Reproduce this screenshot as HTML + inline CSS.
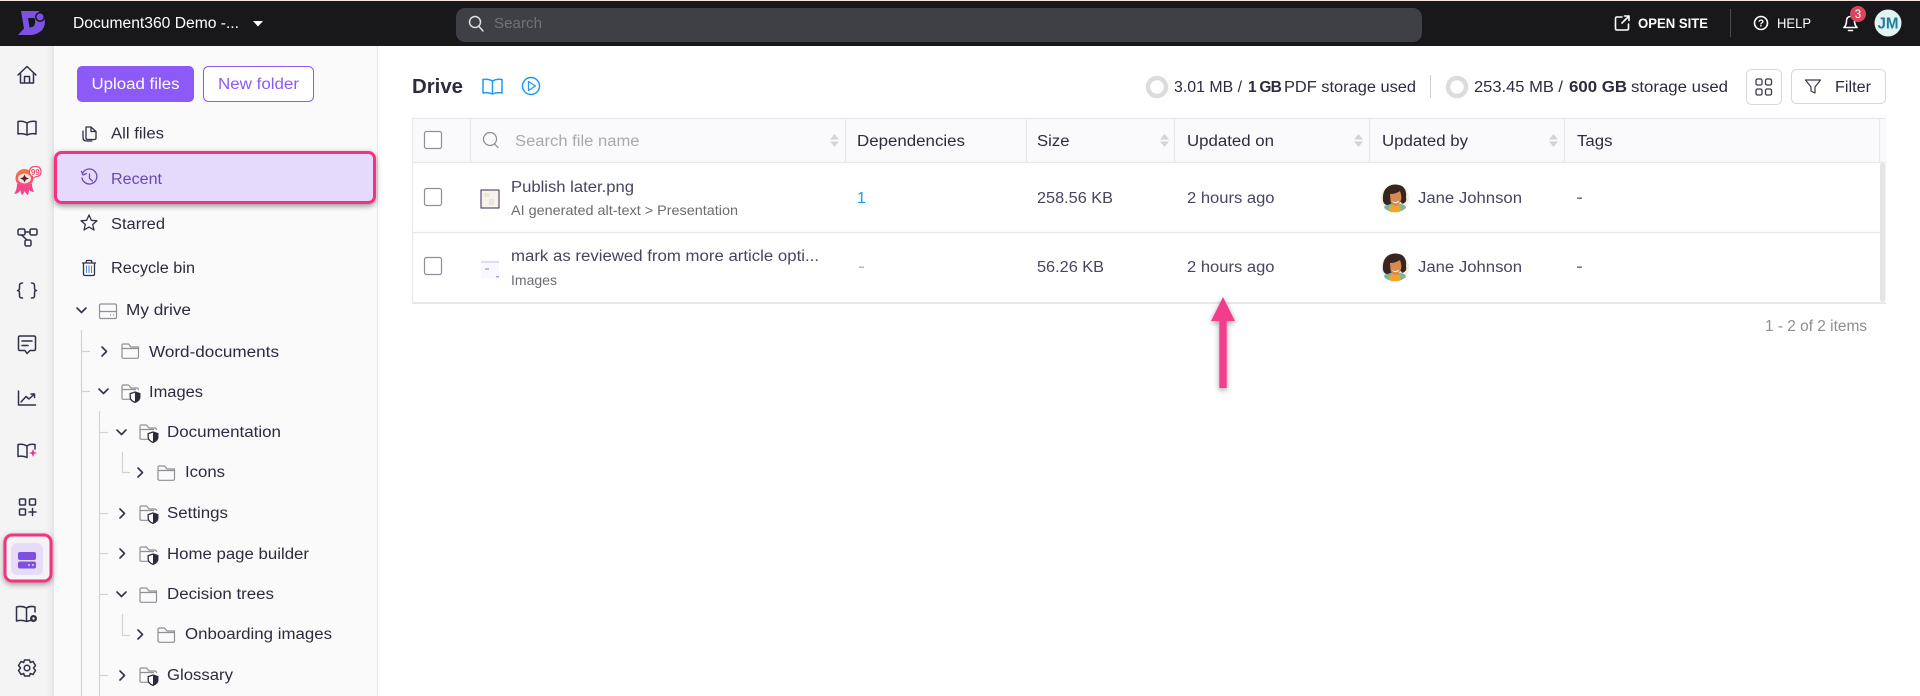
<!DOCTYPE html>
<html lang="en"><head><meta charset="utf-8"><title>Drive</title>
<style>
html,body{margin:0;padding:0;background:#fff;overflow:hidden}
svg{display:block}
text{font-family:"Liberation Sans",sans-serif;font-size:15.5px;fill:#2d2b3d}
.t{fill:#2d2b3d}
.r{fill:#46465f}
.s{font-size:14px;fill:#6b6b72}
.i{fill:none;stroke:#2f3148;stroke-width:1.5;stroke-linecap:round;stroke-linejoin:round}
.g{fill:none;stroke:#8f8f96;stroke-width:1.2;stroke-linejoin:round}
.c{fill:none;stroke:#33334a;stroke-width:1.6;stroke-linecap:round;stroke-linejoin:round}
.l{stroke:#d4d4d8;stroke-width:1.2}
.b{fill:#fff;stroke:#8f8f9a;stroke-width:1.2}
.h{stroke:#e8e8ec;stroke-width:1.2}
.w{fill:none;stroke:#fff;stroke-width:1.6;stroke-linecap:round;stroke-linejoin:round}
</style></head><body>
<svg xmlns="http://www.w3.org/2000/svg" width="1920" height="696" viewBox="0 0 1920 696">
<defs>
<linearGradient id="rail" x1="0" x2="1" y1="0" y2="0"><stop offset="0" stop-color="#f3f3f4" stop-opacity="0"/><stop offset="1" stop-color="#e4e4e6"/></linearGradient>
<linearGradient id="bot" x1="0" x2="0" y1="0" y2="1"><stop offset="0" stop-color="#f47a3c"/><stop offset="1" stop-color="#f4468f"/></linearGradient>
<filter id="sh" x="-10%" y="-30%" width="120%" height="170%"><feDropShadow dx="0" dy="2" stdDeviation="3" flood-color="#000" flood-opacity=".42"/></filter>
<filter id="sh2" x="-40%" y="-30%" width="180%" height="160%"><feDropShadow dx="0" dy="2" stdDeviation="3" flood-color="#000" flood-opacity=".38"/></filter>
<g id="folder"><path class="g" d="M1 14V2.5Q1 1 2.5 1H7.5L10 4H17.5V14Q17.5 15.3 16 15.3H2.5Q1 15.3 1 14ZM1 5.5H17.5"/></g>
<g id="sfolder"><path class="g" d="M1 14V2.5Q1 1 2.5 1H7.5L10 4H15.5Q17.5 4 17.5 6M1 5.5H15M1 14Q1 15.3 2.5 15.3H13"/><path d="M14 8L18.8 9.6V13.4Q18.8 16.4 14 18.4Q9.2 16.4 9.2 13.4V9.6Z" fill="#fafafa" stroke="#2b2b3d" stroke-width="1.3"/><path d="M14 8L18.8 9.6V13.4Q18.8 16.4 14 18.4Z" fill="#2b2b3d"/></g>
<path id="cd" class="c" d="M0 0L4.5 4.5L9 0"/>
<path id="cr" class="c" d="M0 0L4.5 4.5L0 9"/>
<g id="sort"><path d="M0 5.5L4.5 0L9 5.5Z M0 7.5L4.5 13L9 7.5Z" fill="#d3d3d8"/></g>
<g id="avatar">
<circle cx="14" cy="14" r="14" fill="#eef0dc"/>
<path d="M3 24Q3 21 8 20L20 20Q25 21 25 24Q20 28.500 14 28Q8 28.500 3 24Z" fill="#7fb59a"/>
<path d="M8 25Q9 21 14 21Q19 21 20 25L18.500 28Q14 28.500 9.500 28Z" fill="#f1a52d"/>
<path d="M2 17Q1 6 8 2Q14 -1 21 2Q26 6 25 13Q26 18 23 19Q21 21 20 18L9 20Q4 23 2 17Z" fill="#38251f"/>
<path d="M9 10Q14 10 19 7Q21 12 20 16Q18 22 14.500 22Q10.500 21.500 9.500 17Z" fill="#d98a50"/>
<path d="M11.500 17.500Q14.500 19.500 18 17Q15.500 20.500 11.500 17.500Z" fill="#fff" stroke="#fff" stroke-width=".6"/>
</g>
</defs>

<rect width="1920" height="696" fill="#fff"/>
<!-- top bar -->
<rect width="1920" height="46" fill="#18181b"/>
<rect width="1920" height="1" fill="#f7e6e0"/>
<path d="M21 11H38Q44.500 14 45 22Q44.500 30 38 33Q35 35 30 35H18L24 28.500Z" fill="#7c52e0"/>
<path d="M28 18H34.500Q36 22 34 26Q32 27.500 29.500 27.500Z" fill="#18181b"/>
<circle cx="40" cy="17" r="5" fill="#18181b"/><circle cx="40" cy="17" r="3.500" fill="#7c52e0"/>
<text x="73" y="28" textLength="166" lengthAdjust="spacingAndGlyphs" style="fill:#fff">Document360 Demo -...</text>
<path d="M253 21H263L258 26.500Z" fill="#fff"/>
<rect x="456" y="8" width="966" height="34" rx="9" fill="#3f3f46"/>
<circle cx="475" cy="22" r="5.500" fill="none" stroke="#dfdfe3" stroke-width="1.500"/><path d="M479 26.500L483 31" stroke="#dfdfe3" stroke-width="1.500" stroke-linecap="round"/>
<text x="494" y="28" textLength="48" lengthAdjust="spacingAndGlyphs" style="fill:#71717a;font-size:14.500px">Search</text>
<path class="w" d="M1622 17H1617Q1615.500 17 1615.500 18.500V28.500Q1615.500 30 1617 30H1627Q1628.500 30 1628.500 28.500V24M1622 23L1629 16M1624.500 16H1629V20.500"/>
<text x="1638" y="28" textLength="70" lengthAdjust="spacingAndGlyphs" style="fill:#fff;font-weight:700;font-size:13.500px">OPEN SITE</text>
<rect x="1730" y="9" width="1" height="28" fill="#4a4a50"/>
<circle cx="1761" cy="23" r="6.500" class="w"/>
<text x="1761" y="26.500" text-anchor="middle" style="fill:#fff;font-size:10px;font-weight:700">?</text>
<text x="1777" y="28" textLength="34" lengthAdjust="spacingAndGlyphs" style="fill:#fff;font-size:14px">HELP</text>
<path class="w" d="M1844 27.500Q1846.500 25 1846.500 21Q1846.500 16.500 1850.500 16.500Q1854.500 16.500 1854.500 21Q1854.500 25 1857 27.500ZM1848.500 30.500H1852.500"/>
<circle cx="1858" cy="14" r="8" fill="#d8465c"/>
<text x="1858" y="18" text-anchor="middle" style="fill:#fff;font-size:11.500px">3</text>
<circle cx="1888" cy="23" r="13.500" fill="#e3f1f2"/>
<text x="1888" y="28.500" text-anchor="middle" style="fill:#1a7f9c;font-size:15.500px;font-weight:700" textLength="21" lengthAdjust="spacingAndGlyphs">JM</text>

<!-- rail -->
<rect y="46" width="54" height="650" fill="#f4f4f5"/>
<rect x="44" y="46" width="10" height="650" fill="url(#rail)"/>
<!-- sidebar -->
<rect x="54" y="46" width="323" height="650" fill="#fafafa"/>
<rect x="377" y="46" width="1" height="650" fill="#e8e8ea"/>

<!-- rail icons -->
<path class="i" d="M18 75L27 66.500L36 75M20.500 73V83H33.500V73M24.500 83V76.500H29.500V83"/>
<path class="i" d="M27 123Q23 120.500 18 121.500V134Q23 133 27 135Q31 133 36 134V121.500Q31 120.500 27 123ZM27 123V135"/>
<!-- bot -->
<path d="M17 184Q17 190 14 194Q19 193.500 20.500 190Q20.500 193 22 195Q24 193.500 24.500 191Q26 194 28 195Q29 192.500 29 190Q31 192 34 192Q32 188 32 184Z" fill="#f4468f"/>
<circle cx="24.500" cy="178" r="9" fill="url(#bot)"/>
<ellipse cx="24.500" cy="178.500" rx="6.500" ry="5" fill="#fbe3dc"/>
<path d="M24.500 174.500L25.800 177.300L29 178.500L25.800 179.700L24.500 182.500L23.200 179.700L20 178.500L23.200 177.300Z" fill="#5a2030"/>
<path d="M35.500 166.500Q29.500 166.500 29.500 172Q29.500 175.800 32.500 176.500L32 179L35.500 176.800Q41 176.500 41 172Q41 166.500 35.500 166.500Z" fill="#fff" stroke="#f04a72" stroke-width="1.200"/>
<text x="35.300" y="175" text-anchor="middle" style="font-size:8px;fill:#f04a72;font-weight:700">99</text>
<!-- workflow -->
<rect x="18" y="229" width="7" height="6" rx="1.500" class="i"/><rect x="30" y="229" width="7" height="6" rx="1.500" class="i"/><rect x="25" y="240" width="6" height="6" rx="1.500" class="i"/><path class="i" d="M25 232H30M21.500 235L27 240"/>
<path class="i" d="M22.500 283Q19.500 283 19.500 285.500V288Q19.500 290.500 17.500 290.500Q19.500 290.500 19.500 293V296Q19.500 298 22.500 298M31.500 283Q34.500 283 34.500 285.500V288Q34.500 290.500 36.500 290.500Q34.500 290.500 34.500 293V296Q34.500 298 31.500 298"/>
<path class="i" d="M20 336H34Q35.500 336 35.500 337.500V349Q35.500 350.500 34 350.500H30L27 353.500L25 350.500H20Q18.500 350.500 18.500 349V337.500Q18.500 336 20 336ZM22 341H32M22 345.500H28"/>
<path class="i" d="M18.500 391V405H35.500M21 402L26 396.500L29 399L34.500 394M31 394H34.500V397.500"/>
<path class="i" d="M27 446Q23 443.500 18 444.500V456.500Q23 455.500 27 457.500M27 446Q30 443.500 35 444.500V449M27 446V457.500"/>
<path d="M33 449L34.200 452L37 453L34.200 454L33 457L31.800 454L29 453L31.800 452Z" fill="#f0389a"/>
<rect x="19.500" y="499" width="6" height="6" rx="1" class="i"/><rect x="29.500" y="499" width="6" height="6" rx="1" class="i"/><rect x="19.500" y="509" width="6" height="6" rx="1" class="i"/><path class="i" d="M32.500 508.500V515.500M29 512H36"/>
<!-- drive active -->
<rect x="5" y="535" width="46" height="46" rx="7" fill="#f4f4f5" stroke="#f4337f" stroke-width="3" filter="url(#sh2)"/>
<rect x="11" y="543" width="32" height="32" rx="6" fill="#e6dcfa"/>
<rect x="18" y="552" width="18" height="8" rx="2" fill="#7f4fe0"/><rect x="18" y="561.500" width="18" height="7" rx="2" fill="#7f4fe0"/>
<circle cx="29" cy="565" r=".9" fill="#fff"/><circle cx="33" cy="565" r=".9" fill="#fff"/>
<path class="i" d="M26.500 608Q22 605.500 16.500 607V621Q22 619.500 26.500 621.500Q29 620.500 31 620.500M26.500 608Q30 605.500 35 607V612M26.500 608V621.500"/>
<circle cx="33.500" cy="618.500" r="3.500" fill="#2f3148"/><circle cx="33.500" cy="618.500" r="1.200" fill="#f4f4f5"/>
<path class="i" d="M24.500 660H29.500L30.300 662.500L33 661.500L35.500 665.500L33.500 668L35.500 670.500L33 674.500L30.300 673.500L29.500 676H24.500L23.700 673.500L21 674.500L18.500 670.500L20.500 668L18.500 665.500L21 661.500L23.700 662.500Z"/><circle cx="27" cy="668" r="2.800" class="i"/>

<!-- buttons -->
<rect x="77" y="66" width="117" height="36" rx="5" fill="#8b5af7"/>
<text x="91.500" y="89" textLength="88" lengthAdjust="spacingAndGlyphs" style="fill:#fff">Upload files</text>
<rect x="203.500" y="66.500" width="110" height="35" rx="5" fill="#fff" stroke="#8b5af7"/>
<text x="218" y="89" textLength="81" lengthAdjust="spacingAndGlyphs" style="fill:#8b5af7">New folder</text>

<!-- nav -->
<path class="i" d="M86 127H91L96 131.500V138Q96 139.500 94.500 139.500H87.500Q86 139.500 86 138ZM91 127V131.500H96M83 131V137.500Q83 141 86.500 141H92" style="stroke-width:1.300"/>
<text x="111" y="138.500" textLength="53" lengthAdjust="spacingAndGlyphs">All files</text>
<rect x="55.500" y="152.500" width="319" height="50" rx="6" fill="#e5dafc" stroke="#f4337f" stroke-width="3" filter="url(#sh)"/>
<path class="i" style="stroke:#6b4bb3;stroke-width:1.300" d="M83 172.500A7.500 7.500 0 1 1 82 178M81.500 171.500L83 175L86.500 173.500M89.500 174V178.500L92.500 181"/>
<text x="111" y="184" textLength="51" lengthAdjust="spacingAndGlyphs" style="fill:#6a46b4">Recent</text>
<path class="i" style="stroke-width:1.300" d="M89 215L91.300 220.300L97 220.800L92.700 224.500L94 230L89 227.100L84 230L85.300 224.500L81 220.800L86.700 220.300Z"/>
<text x="111" y="229" textLength="54" lengthAdjust="spacingAndGlyphs">Starred</text>
<path class="i" style="stroke-width:1.300" d="M82.500 263H95.500M86 263L86.500 260.500H91.500L92 263M83.500 263V274Q83.500 275.500 85 275.500H93Q94.500 275.500 94.500 274V263"/>
<path d="M86.500 265.500V273M89 265.500V273M91.500 265.500V273" stroke="#4f8fd0" stroke-width="1.100"/>
<text x="111" y="273" textLength="84" lengthAdjust="spacingAndGlyphs">Recycle bin</text>
<use href="#cd" x="77" y="308"/>
<path class="g" d="M101 304H115Q116.500 304 116.500 305.500V317Q116.500 318.500 115 318.500H101Q99.500 318.500 99.500 317V305.500Q99.500 304 101 304ZM99.500 311.500H116.500"/><path d="M110 315H111M113 315H114" stroke="#8f8f96" stroke-width="1.200"/>
<text x="126" y="315" textLength="65" lengthAdjust="spacingAndGlyphs" class="t">My drive</text>

<!-- tree lines -->
<path class="l" d="M81.500 330V696M81.500 351.500H90M81.500 391.500H90M99.500 411V696M99.500 432.500H108M99.500 513.500H108M99.500 553.500H108M99.500 594.500H108M99.500 675.500H108M122.500 452V472.500H130M122.500 614V635.500H130" fill="none"/>

<use href="#cr" x="102" y="347"/><use href="#folder" x="121" y="343"/>
<text x="149" y="357" textLength="130" lengthAdjust="spacingAndGlyphs">Word-documents</text>
<use href="#cd" x="99" y="389"/><use href="#sfolder" x="121" y="384"/>
<text x="149" y="397" textLength="54" lengthAdjust="spacingAndGlyphs">Images</text>
<use href="#cd" x="117" y="430"/><use href="#sfolder" x="139" y="424"/>
<text x="167" y="437" textLength="114" lengthAdjust="spacingAndGlyphs">Documentation</text>
<use href="#cr" x="138" y="468"/><use href="#folder" x="157" y="465"/>
<text x="185" y="477" textLength="40" lengthAdjust="spacingAndGlyphs">Icons</text>
<use href="#cr" x="120" y="509"/><use href="#sfolder" x="139" y="505"/>
<text x="167" y="518" textLength="61" lengthAdjust="spacingAndGlyphs">Settings</text>
<use href="#cr" x="120" y="549"/><use href="#sfolder" x="139" y="546"/>
<text x="167" y="559" textLength="142" lengthAdjust="spacingAndGlyphs">Home page builder</text>
<use href="#cd" x="117" y="592"/><use href="#folder" x="139" y="587"/>
<text x="167" y="599" textLength="107" lengthAdjust="spacingAndGlyphs">Decision trees</text>
<use href="#cr" x="138" y="630"/><use href="#folder" x="157" y="627"/>
<text x="185" y="639" textLength="147" lengthAdjust="spacingAndGlyphs">Onboarding images</text>
<use href="#cr" x="120" y="671"/><use href="#sfolder" x="139" y="667"/>
<text x="167" y="680" textLength="66" lengthAdjust="spacingAndGlyphs">Glossary</text>

<!-- main head -->
<text x="412" y="93" textLength="51" lengthAdjust="spacingAndGlyphs" style="font-size:20px;font-weight:700">Drive</text>
<path fill="none" stroke="#1e9bf0" stroke-width="1.500" stroke-linejoin="round" d="M492.500 81Q488 78.500 483 79.500V93Q488 92 492.500 94Q497 92 502 93V79.500Q497 78.500 492.500 81ZM492.500 81V94"/>
<circle cx="531" cy="86" r="8.500" fill="none" stroke="#1e9bf0" stroke-width="1.500"/><path d="M528.500 81.500L535.500 86L528.500 90.500Z" fill="none" stroke="#1e9bf0" stroke-width="1.300" stroke-linejoin="round"/>

<circle cx="1157" cy="87" r="9" fill="none" stroke="#dcdcdc" stroke-width="4.500"/>
<text x="1174" y="92" textLength="68" lengthAdjust="spacingAndGlyphs">3.01 MB /</text>
<text x="1248" y="92" style="font-weight:700;font-size:15.500px;letter-spacing:-.8px">1 GB</text>
<text x="1284" y="92" textLength="132" lengthAdjust="spacingAndGlyphs">PDF storage used</text>
<rect x="1430" y="75" width="1" height="23" fill="#cfcfd4"/>
<circle cx="1457" cy="87" r="9" fill="none" stroke="#dcdcdc" stroke-width="4.500"/>
<text x="1474" y="92" textLength="89" lengthAdjust="spacingAndGlyphs">253.45 MB /</text>
<text x="1569" y="92" textLength="58" lengthAdjust="spacingAndGlyphs" style="font-weight:700">600 GB</text>
<text x="1631" y="92" textLength="97" lengthAdjust="spacingAndGlyphs">storage used</text>

<rect x="1746.500" y="69.500" width="35" height="35" rx="5" fill="#fff" stroke="#d8d8dc"/>
<g fill="none" stroke="#3a3a4a" stroke-width="1.300"><rect x="1756" y="79" width="6" height="6" rx="1.500"/><rect x="1765.500" y="79" width="6" height="6" rx="1.500"/><rect x="1756" y="89" width="6" height="6" rx="1.500"/><rect x="1765.500" y="89" width="6" height="6" rx="1.500"/></g>
<rect x="1791.500" y="69.500" width="94" height="34" rx="5" fill="#fff" stroke="#d8d8dc"/>
<path d="M1805.500 80H1820.500L1815 87V93L1811 91V87Z" fill="none" stroke="#3a3a4a" stroke-width="1.200" stroke-linejoin="round"/>
<text x="1835" y="92" textLength="36" lengthAdjust="spacingAndGlyphs">Filter</text>

<!-- table -->
<rect x="412" y="118" width="1474" height="44" fill="#fafafc"/>
<path class="h" d="M412 118.500H1886M412 162.500H1886M412.500 118V302M470.500 118V162M845.500 118V162M1026.500 118V162M1174.500 118V162M1369.500 118V162M1564.500 118V162M1879.500 118V162M412 232.500H1880"/>
<rect x="412" y="302" width="1474" height="2" fill="#e8e8ea"/>
<rect x="1880" y="163" width="5.500" height="139" rx="2.500" fill="#e4e4e4"/>

<rect x="424.500" y="131.500" width="17" height="17" rx="2" class="b"/>
<circle cx="490" cy="139" r="6.500" fill="none" stroke="#8a8a90" stroke-width="1.200"/><path d="M494.500 144L498 147.500" stroke="#8a8a90" stroke-width="1.200" stroke-linecap="round"/>
<text x="515" y="146" textLength="124.500" lengthAdjust="spacingAndGlyphs" style="fill:#a9a9ae">Search file name</text>
<use href="#sort" x="830" y="134"/>
<text x="857" y="146" textLength="108" lengthAdjust="spacingAndGlyphs">Dependencies</text>
<text x="1037" y="146" textLength="32.500" lengthAdjust="spacingAndGlyphs">Size</text>
<use href="#sort" x="1160" y="134"/>
<text x="1187" y="146" textLength="87" lengthAdjust="spacingAndGlyphs">Updated on</text>
<use href="#sort" x="1354" y="134"/>
<text x="1382" y="146" textLength="86" lengthAdjust="spacingAndGlyphs">Updated by</text>
<use href="#sort" x="1549" y="134"/>
<text x="1577" y="146" textLength="35.500" lengthAdjust="spacingAndGlyphs">Tags</text>

<!-- row 1 -->
<rect x="424.500" y="188.500" width="17" height="17" rx="2" class="b"/>
<rect x="481" y="190" width="18" height="18" fill="#f8f2ec" stroke="#3a2a52" stroke-width="1"/>
<rect x="484" y="193" width="5" height="4" fill="#f0e6d0"/><rect x="489" y="199" width="5" height="6" fill="#ebe5dc"/>
<text x="511" y="192" textLength="123" lengthAdjust="spacingAndGlyphs" class="r">Publish later.png</text>
<text x="511" y="215" textLength="227" lengthAdjust="spacingAndGlyphs" class="s">AI generated alt-text &gt; Presentation</text>
<text x="857" y="203" style="fill:#1a9cf0;font-size:16px">1</text>
<text x="1037" y="203" textLength="76" lengthAdjust="spacingAndGlyphs" class="r">258.56 KB</text>
<text x="1187" y="203" textLength="87.500" lengthAdjust="spacingAndGlyphs" class="r">2 hours ago</text>
<use href="#avatar" x="1381" y="184"/>
<text x="1418" y="203" textLength="104" lengthAdjust="spacingAndGlyphs" class="r">Jane Johnson</text>
<rect x="1577" y="197.500" width="5" height="1.300" fill="#5a5a70"/>

<!-- row 2 -->
<rect x="424.500" y="257.500" width="17" height="17" rx="2" class="b"/>
<rect x="481" y="260" width="18" height="18" fill="#f9f8fc"/>
<rect x="481" y="261" width="18" height="2" fill="#dedef2"/><rect x="485" y="268" width="4" height="2" fill="#c4b4f0"/><rect x="496" y="276" width="3" height="1.500" fill="#b09ae8"/>
<text x="511" y="261" textLength="308" lengthAdjust="spacingAndGlyphs" class="r">mark as reviewed from more article opti...</text>
<text x="511" y="285" textLength="46" lengthAdjust="spacingAndGlyphs" class="s">Images</text>
<rect x="859" y="266.500" width="5" height="1.300" fill="#a9a9ae"/>
<text x="1037" y="272" textLength="67" lengthAdjust="spacingAndGlyphs" class="r">56.26 KB</text>
<text x="1187" y="272" textLength="87.500" lengthAdjust="spacingAndGlyphs" class="r">2 hours ago</text>
<use href="#avatar" x="1381" y="253"/>
<text x="1418" y="272" textLength="104" lengthAdjust="spacingAndGlyphs" class="r">Jane Johnson</text>
<rect x="1577" y="266.500" width="5" height="1.300" fill="#5a5a70"/>

<text x="1765" y="331" textLength="102" lengthAdjust="spacingAndGlyphs" style="fill:#8e8e94">1 - 2 of 2 items</text>

<!-- arrow -->
<path d="M1223 297L1235 321H1226.700V388H1219.300V321H1211Z" fill="#f23d8d" filter="url(#sh2)"/>
</svg>
</body></html>
